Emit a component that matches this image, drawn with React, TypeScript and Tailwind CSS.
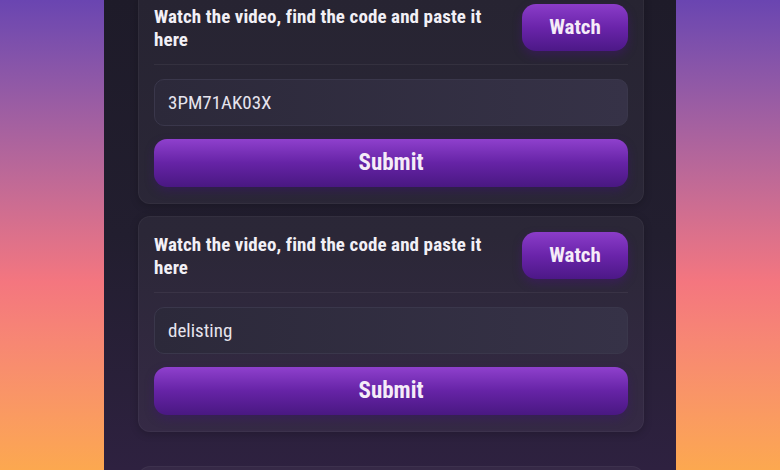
import React from "react";

interface Task {
  id: number;
  code: string;
}

const tasks: Task[] = [
  { id: 1, code: "3PM71AK03X" },
  { id: 2, code: "delisting" },
];

const TaskCard: React.FC<{ task: Task }> = ({ task }) => {
  return (
    <div className="rounded-[12px] bg-white/[0.045] border border-white/[0.04] px-[15px] pt-[15px] pb-[16px] shadow-[0_2px_8px_rgba(0,0,0,0.2)]">
      {/* header */}
      <div className="flex items-center justify-between gap-3 pb-[13px] border-b border-white/[0.06]">
        <p className="flex-1 text-[19px] leading-[23px] font-bold text-[#f2f0f6] font-stretch-[85%] tracking-[0.1px]">
          Watch the video, find the code and paste it here
        </p>
        <button className="w-[106px] h-[47px] rounded-[14px] bg-gradient-to-b from-[#8b3cc9] via-[#6a24aa] to-[#4c1887] text-[#f5ecf8] text-[21px] font-bold font-stretch-[85%] shadow-[0_4px_10px_rgba(70,20,120,0.45)]">
          Watch
        </button>
      </div>

      {/* code input */}
      <input
        readOnly
        value={task.code}
        className="mt-[14px] w-full h-[47px] rounded-[10px] bg-gradient-to-r from-[#2c293a] to-[#363247] border border-[#3a374b] px-[13px] text-[19px] text-[#e6e4ee] font-stretch-[85%] outline-none"
      />

      <button className="mt-[13px] w-full h-[48px] rounded-[13px] bg-gradient-to-b from-[#8f40cd] via-[#6623a6] to-[#491882] text-[#f5ecf8] text-[23px] font-bold font-stretch-[85%] shadow-[0_4px_10px_rgba(60,20,110,0.45)]">
        Submit
      </button>
    </div>
  );
};

export default function App() {
  return (
    <div
      className="w-[780px] h-[470px] overflow-hidden bg-gradient-to-b from-[#6a45b1] via-[#f4767f] via-60% to-[#fca84f]"
      style={{ fontFamily: "Roboto, 'Noto Sans', sans-serif" }}
    >
      <div className="mx-auto w-[572px] h-full flex flex-col bg-gradient-to-b from-[#1e1b29] via-[#221e2f] to-[#2e2140] pl-[34px] pr-[32px]">
        <div className="-mt-[12px] flex flex-col gap-[12px]">
          {tasks.map((task) => (
            <TaskCard key={task.id} task={task} />
          ))}
          <div className="mt-[22px] h-[40px] rounded-[12px] bg-white/[0.04] border border-white/[0.04]" />
        </div>
      </div>
    </div>
  );
}
